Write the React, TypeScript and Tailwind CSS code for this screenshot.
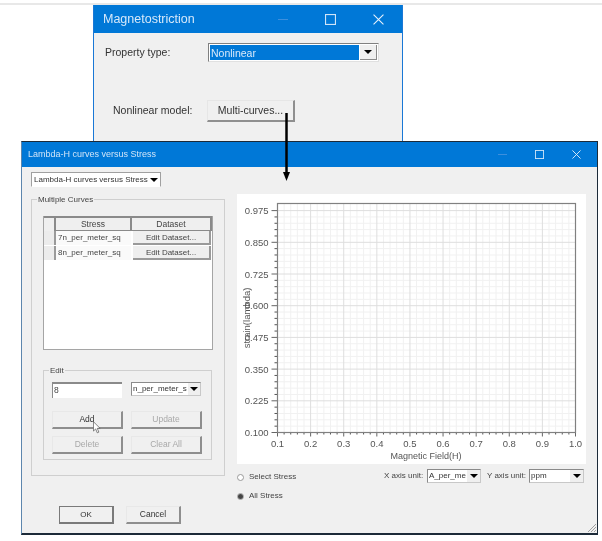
const FONT = "font-['Liberation_Sans',Arial,sans-serif]";

function CaptionButtons({ big }: { big?: boolean }) {
  const s = big ? 11 : 9;
  return (
    <div className={`flex items-center ${big ? 'gap-[37px]' : 'gap-[28px]'}`}>
      <span className={`${big ? 'w-[10px]' : 'w-[9px]'} h-px bg-[#3d8fdd]`} />
      <svg width={s} height={s} viewBox="0 0 10 10" fill="none" stroke="#cfe4f8" strokeWidth="1">
        <rect x="0.5" y="0.5" width="9" height="9" />
      </svg>
      <svg width={s} height={s} viewBox="0 0 10 10" fill="none" stroke="#e6f1fb" strokeWidth="1">
        <path d="M0.5 0.5 9.5 9.5M9.5 0.5 0.5 9.5" />
      </svg>
    </div>
  );
}

function ComboArrow({ className = '' }: { className?: string }) {
  return (
    <span className={`flex items-center justify-center bg-[#efefef] ${className}`}>
      <span className="w-0 h-0 border-x-[4px] border-x-transparent border-t-[4px] border-t-black" />
    </span>
  );
}

function Combo({ text, w, arrow = 'w-[13px]' }: { text: string; w: string; arrow?: string }) {
  return (
    <div className={`${w} h-[14px] flex bg-white border border-t-[#8a8a8a] border-l-[#8a8a8a] border-r-[#c8c8c8] border-b-[#c8c8c8] text-[8px] leading-[12px] text-[#333]`}>
      <span className="flex-1 pl-px whitespace-nowrap">{text}</span>
      <ComboArrow className={arrow} />
    </div>
  );
}

function GroupBox({ title, className, children }: { title: string; className: string; children: React.ReactNode }) {
  return (
    <div className={`relative border border-[#cfcfcf] ${className}`}>
      <span className="absolute left-[5px] top-[-6px] bg-[#f0f0f0] px-px text-[8px] leading-[11px] text-[#444]">{title}</span>
      {children}
    </div>
  );
}

function FlatButton({ label, disabled, w = 'w-[71px]' }: { label: string; disabled?: boolean; w?: string }) {
  return (
    <div className={`${w} h-[18px] flex items-center justify-center bg-[#f0f0f0] border-b-2 border-r-2 border-b-[#8e8e8e] border-r-[#8e8e8e] border-t border-l border-t-[#e8e8e8] border-l-[#e8e8e8] text-[8.5px] ${disabled ? 'text-[#a8a8a8]' : 'text-[#333]'}`}>
      {label}
    </div>
  );
}

function StressRow({ stress }: { stress: string }) {
  return (
    <div className="flex h-[14px] mb-px text-[8px] leading-[13px] text-[#444]">
      <div className="w-[12px] bg-[#ececec] border-r-2 border-[#9a9a9a]" />
      <div className="w-[75px] pl-[2px] bg-[#fafafa] whitespace-nowrap">{stress}</div>
      <div className="w-[78px] ml-[2px] flex items-center justify-center bg-[#efefef] border-r-2 border-b-2 border-[#9a9a9a]">Edit Dataset...</div>
    </div>
  );
}

function Chart() {
  const x0 = 40.5, x1 = 338.5, yTop = 9.5, yBot = 238.5;
  const dx = (x1 - x0) / 9;
  const stepY = 31.7;
  const xLabels = ['0.1', '0.2', '0.3', '0.4', '0.5', '0.6', '0.7', '0.8', '0.9', '1.0'];
  const yLabels = ['0.100', '0.225', '0.350', '0.475', '0.600', '0.725', '0.850', '0.975'];
  const minorX: number[] = [];
  for (let i = 0; i < 45; i++) if (i % 5) minorX.push(x0 + (i * dx) / 5);
  const minorY: number[] = [];
  for (let i = 0; i < 36; i++) {
    const y = yBot - (i * stepY) / 5;
    if (i % 5 && y > yTop) minorY.push(y);
  }
  return (
    <svg width="349" height="270" className="block" fontFamily="Liberation Sans, Arial, sans-serif">
      {minorX.map((x) => <line key={x} x1={x} x2={x} y1={yTop} y2={yBot} stroke="#f1f1f1" />)}
      {minorY.map((y) => <line key={y} x1={x0} x2={x1} y1={y} y2={y} stroke="#f1f1f1" />)}
      {xLabels.map((t, i) => (
        <g key={t}>
          {i > 0 && i < 9 && <line x1={x0 + i * dx} x2={x0 + i * dx} y1={yTop} y2={yBot} stroke="#dedede" />}
          <text x={x0 + i * dx} y={yBot + 14} textAnchor="middle" fontSize="9.5" fill="#555">{t}</text>
          <line x1={x0 + i * dx} x2={x0 + i * dx} y1={yBot} y2={yBot + 4} stroke="#666" />
        </g>
      ))}
      {Array.from({ length: 46 }, (_, i) => i).filter((i) => i % 5).map((i) => (
        <line key={i} x1={x0 + (i * dx) / 5} x2={x0 + (i * dx) / 5} y1={yBot} y2={yBot + 2} stroke="#555" />
      ))}
      {yLabels.map((t, i) => (
        <g key={t}>
          {i > 0 && <line x1={x0} x2={x1} y1={yBot - i * stepY} y2={yBot - i * stepY} stroke="#dedede" />}
          <line x1={x0 - 6} x2={x0} y1={yBot - i * stepY} y2={yBot - i * stepY} stroke="#666" />
          <text x={x0 - 9} y={yBot - i * stepY + 3.5} textAnchor="end" fontSize="9.5" fill="#555">{t}</text>
        </g>
      ))}
      {minorY.map((y) => <line key={`t${y}`} x1={x0 - 3} x2={x0} y1={y} y2={y} stroke="#555" />)}
      <rect x={x0} y={yTop} width={x1 - x0} height={yBot - yTop} fill="none" stroke="#808080" strokeWidth="1.2" />
      <text x={189} y={265} textAnchor="middle" fontSize="9" fill="#555">Magnetic Field(H)</text>
      <text transform="translate(13 124) rotate(-90)" textAnchor="middle" fontSize="9.5" fill="#555">strain(lambda)</text>
    </svg>
  );
}

function Radio({ checked, label }: { checked?: boolean; label: string }) {
  return (
    <div className="flex items-center h-[12px] text-[8px] text-[#444]">
      <span className="w-[7px] h-[7px] rounded-full bg-white border border-[#9a9a9a] flex items-center justify-center">
        {checked && <span className="w-[5px] h-[5px] rounded-full bg-[#444]" />}
      </span>
      <span className="ml-[5px]">{label}</span>
    </div>
  );
}

function CursorIcon() {
  return (
    <svg width="8" height="13" viewBox="0 0 9 14" className="absolute left-[41px] top-[10px]">
      <path d="M0.5 0.5V11L3 8.6 4.8 13 6.6 12.2 4.8 8H8Z" fill="#fff" stroke="#555" strokeWidth="0.8" />
    </svg>
  );
}

export default function App() {
  return (
    <div className={`relative w-[602px] h-[541px] bg-white overflow-hidden blur-[0.35px] ${FONT}`}>
      <div className="mt-[3px] h-[2px] bg-[#e8e8e8]" />

      {/* Magnetostriction window */}
      <div className="absolute left-[93px] top-[5px] w-[310px] h-[137px] bg-[#f0f0f0] border-x border-[#1a78d6]">
        <div className="h-[28px] bg-[#0078d7] flex items-center justify-between pl-[9px] pr-[18px]">
          <span className="text-[12.5px] text-[#d5e8fa]">Magnetostriction</span>
          <CaptionButtons big />
        </div>
        <div className="flex items-center pl-[11px] pt-[10px]">
          <span className="w-[103px] text-[10.5px] text-[#333]">Property type:</span>
          <div className="w-[171px] h-[19px] flex p-px bg-white border border-t-[#808080] border-l-[#808080] border-r-[#e0e0e0] border-b-[#e0e0e0]">
            <span className="flex-1 bg-[#0078d7] text-[10.5px] leading-[16px] text-[#d8e9fa] pl-px">Nonlinear</span>
            <ComboArrow className="w-[17px] ml-px border-r border-b border-[#8a8a8a]" />
          </div>
        </div>
        <div className="flex items-center pl-[19px] pt-[38px]">
          <span className="w-[94px] text-[10.5px] text-[#333] whitespace-nowrap">Nonlinear model:</span>
          <div className="w-[88px] h-[22px] flex items-center justify-center bg-[#f0f0f0] border-r-2 border-b-2 border-r-[#8f8f8f] border-b-[#8f8f8f] border-t border-l border-t-[#e6e6e6] border-l-[#e6e6e6] text-[10.5px] text-[#333]">Multi-curves...</div>
        </div>
      </div>

      {/* Lambda-H curves window */}
      <div className="absolute left-[21px] top-[141px] w-[577px] h-[394px] bg-[#f0f0f0] border border-[#1c2a38] border-l-[#5d86ad] border-b-2 flex flex-col">
        <div className="h-[25px] shrink-0 bg-[#0078d7] flex items-center justify-between pl-[6px] pr-[16px]">
          <span className="text-[9px] text-[#cfe4f8]">Lambda-H curves versus Stress</span>
          <CaptionButtons />
        </div>
        <div className="flex flex-1 pl-[9px]">
          {/* left column */}
          <div className="w-[206px] flex flex-col pt-[5px]">
            <div className="w-[130px] h-[15px] flex bg-white border border-t-[#a0a0a0] border-l-[#a0a0a0] border-r-[#a0a0a0] border-b-transparent text-[8px] leading-[13px] text-[#333]">
              <span className="flex-1 pl-[2px] whitespace-nowrap">Lambda-H curves versus Stress</span>
              <ComboArrow className="w-[12px] bg-white" />
            </div>
            <GroupBox title="Multiple Curves" className="mt-[12px] w-[194px] h-[277px] pl-[11px] pt-[16px]">
              <div className="w-[170px] h-[134px] bg-white border border-[#a5a5a5] border-t-0">
                <div className="flex h-[15px] text-[8.5px] leading-[13px] text-[#444] bg-[#efefef] border-t-2 border-[#8a8a8a]">
                  <div className="w-[12px] border-r-2 border-[#8a8a8a]" />
                  <div className="w-[76px] text-center border-r-2 border-b border-[#8a8a8a]">Stress</div>
                  <div className="w-[80px] text-center border-r-2 border-b border-[#8a8a8a]">Dataset</div>
                </div>
                <StressRow stress="7n_per_meter_sq" />
                <StressRow stress="8n_per_meter_sq" />
              </div>
              <GroupBox title="Edit" className="mt-[20px] w-[169px] h-[90px] pl-[8px] pt-[11px]">
                <div className="flex gap-[9px]">
                  <div className="w-[70px] h-[16px] bg-white border-t-2 border-l border-t-[#8a8a8a] border-l-[#8a8a8a] pl-px text-[8.5px] leading-[13px] text-[#444]">8</div>
                  <Combo text="n_per_meter_s" w="w-[70px]" arrow="w-[12px]" />
                </div>
                <div className="mt-[13px] grid grid-cols-[71px_71px] gap-x-[8px] gap-y-[7px]">
                  <div className="relative">
                    <FlatButton label="Add" />
                    <CursorIcon />
                  </div>
                  <FlatButton label="Update" disabled />
                  <FlatButton label="Delete" disabled />
                  <FlatButton label="Clear All" disabled />
                </div>
              </GroupBox>
            </GroupBox>
            <div className="mt-[30px] ml-[28px] flex gap-[12px]">
              <div className="w-[55px] h-[18px] flex items-center justify-center bg-[#f0f0f0] border-2 border-[#7a7a7a] border-t border-l text-[8px] text-[#333]">OK</div>
              <FlatButton label="Cancel" w="w-[55px]" />
            </div>
          </div>
          {/* right column */}
          <div className="w-[349px] pt-[27px]">
            <div className="bg-white h-[270px]">
              <Chart />
            </div>
            <div className="flex pt-[5px]">
              <div className="w-[147px] flex flex-col gap-[7px] pt-[2px]">
                <Radio label="Select Stress" />
                <Radio checked label="All Stress" />
              </div>
              <div className="flex items-start text-[8px] text-[#444]">
                <span className="w-[43px] leading-[14px] whitespace-nowrap">X axis unit:</span>
                <Combo text="A_per_me" w="w-[54px]" />
                <span className="w-[42px] ml-[6px] leading-[14px] whitespace-nowrap">Y axis unit:</span>
                <Combo text="ppm" w="w-[55px]" />
              </div>
            </div>
          </div>
        </div>
        <svg width="11" height="11" viewBox="0 0 11 11" className="absolute right-0 bottom-0" stroke="#a0a0a0">
          <path d="M2 10 10 2M5 10 10 5M8 10 10 8" />
        </svg>
      </div>

      {/* arrow linking the two dialogs */}
      <svg width="10" height="72" viewBox="0 0 10 72" className="absolute left-[281px] top-[111px]">
        <path d="M5.5 2V63" stroke="#000" strokeWidth="2.5" />
        <path d="M2 61H9L5.5 70Z" fill="#000" />
      </svg>
    </div>
  );
}
